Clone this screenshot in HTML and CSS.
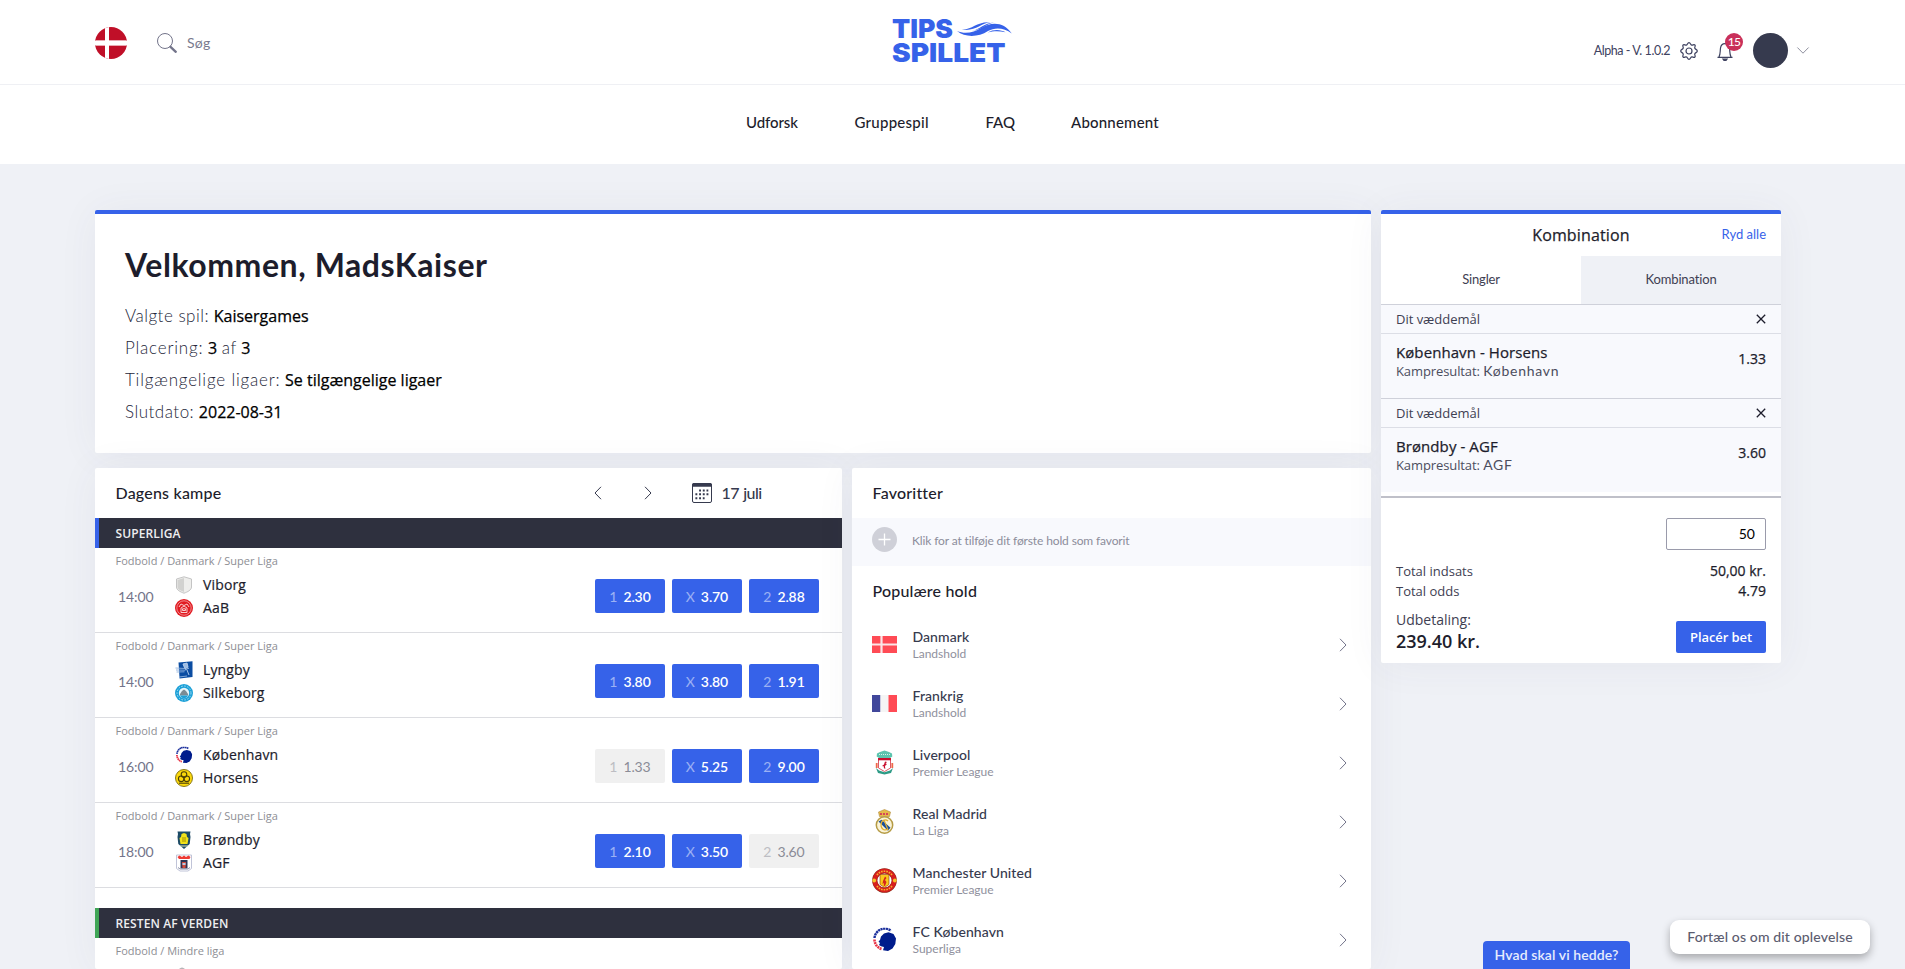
FILE: index.html
```
<!DOCTYPE html>
<html lang="da">
<head>
<meta charset="utf-8">
<title>Tipsspillet</title>
<link rel="stylesheet" href="styles.css">
</head>
<body>
<svg width="0" height="0" class="defs">
  <symbol id="next" viewBox="0 0 8 14"><path d="M1 .8 7 7 1 13.200" fill="none" stroke="currentColor" stroke-width="1"/></symbol>
  <symbol id="cross" viewBox="0 0 10 10"><path d="M.8.8 9.200 9.200M9.200.8.8 9.200" fill="none" stroke="currentColor" stroke-width="1.300"/></symbol>
  <symbol id="fck" viewBox="0 0 24 24">
    <path d="M9 21.500A10 10 0 0 1 2 11.500" fill="none" stroke="#e8384a" stroke-width="2.600" stroke-dasharray="2 .6"/>
    <path d="M2 10.500A10.300 10.300 0 0 1 18.500 3.200" fill="none" stroke="#1b2f9c" stroke-width="2.400" stroke-dasharray="2.200 .5"/>
    <path d="M8.500 9 11.500 6 16 4.800 21 6.500 23.500 11 22.800 16.500 20 21 15.500 23.400 10.500 22.800 11.500 19.500 8.500 18.800 6.500 17.500 7.500 15.500 6 14 7.500 12.500z" fill="#001c8c"/>
  </symbol>
</svg>

<header class="top">
  <div class="top-left">
    <svg class="flag-round" viewBox="0 0 32 32"><circle cx="16" cy="16" r="16" fill="#c00f28"/><path d="M10 1.200Q12 .4 14 .1v31.800Q12 31.600 10 30.800z" fill="#fff"/><path d="M.2 13h31.600v6H.2z" fill="#e9a9b1"/><path d="M0 14h32v4H0zM10 12h4v8h-4z" fill="#fff"/></svg>
    <svg class="search-icon" viewBox="0 0 20 20"><circle cx="8" cy="8" r="7.500" fill="none" stroke="#73748a"/><path d="m13.500 13.800 5.300 5" stroke="#73748a" stroke-width="2.300" stroke-linecap="round"/></svg>
    <span class="search-text">Søg</span>
  </div>
  <svg class="logo" viewBox="0 0 122 46">
    <g fill="#3662e9" class="logo-text"><text x="0" y="22" textLength="61" lengthAdjust="spacingAndGlyphs">TIPS</text><text x="0" y="45.500" textLength="113.500" lengthAdjust="spacingAndGlyphs">SPILLET</text></g>
    <path d="M65 15C73 18.500 82 16.500 89 12 99 5.500 112 5.500 119.800 17.500 112 11.500 103 11 96 15 86 21.500 73 21.500 65 15z" fill="#3662e9"/>
    <path d="M68 13.200C80 15 84 5 98.500 6.300 88 7.500 83 16.500 68 13.200zM80 15C88 13.500 92 7 102 6.600 94 8 90 14 80 15zM95.500 16.500C102 12.800 109 13.500 113.500 16.300 107 14.800 102 14.800 95.500 16.500z" fill="#3662e9"/>
  </svg>
  <div class="top-right">
    <span class="version">Alpha - V. 1.0.2</span>
    <svg class="gear" viewBox="0 0 18 18" fill="none" stroke="#3e4260" stroke-width="1.200"><circle cx="9" cy="9" r="3"/><path d="M9 .7c1.600 0 1.400 2 2.600 2.400 1.200.5 2.200-1.200 3.300-.1s-.6 2.200-.1 3.300C15.300 7.500 17.300 7.400 17.300 9s-2 1.500-2.500 2.700 1.200 2.200.1 3.300-2.200-.6-3.300-.1C10.400 15.300 10.600 17.300 9 17.300s-1.400-2-2.600-2.400c-1.200-.5-2.200 1.200-3.300.1s.6-2.200.1-3.300C2.700 10.500.7 10.600.7 9s2-1.500 2.500-2.700S2 4.100 3.100 3s2.200.6 3.300.1C7.600 2.700 7.400.7 9 .7z"/></svg>
    <div class="bell-wrap">
      <svg class="bell" viewBox="0 0 16 20" fill="none" stroke="#3e4260" stroke-width="1.200"><path d="M.5 16.300h15M2 16c1.500-3 1-5 1.500-9C4 3.500 6 2.600 8 2.600s4 .9 4.500 4.400c.5 4 0 6 1.500 9"/><path d="M6 18.200h4l-1 1.300H7z" fill="#3e4260"/></svg>
      <span class="badge">15</span>
    </div>
    <span class="avatar"></span>
    <svg class="down" viewBox="0 0 12 7"><path d="M.4.500 6 6.200 11.600.5" fill="none" stroke="#8f909f"/></svg>
  </div>
</header>
<nav class="nav"><a class="n1">Udforsk</a><a class="n2">Gruppespil</a><a class="n3">FAQ</a><a class="n4">Abonnement</a></nav>

<main class="page">
  <div class="main-col">
    <section class="card welcome">
      <h1>Velkommen, MadsKaiser</h1>
      <p><span class="l1">Valgte spil:</span> <b>Kaisergames</b></p>
      <p><span class="l2">Placering:</span> <b>3</b> <span>af</span> <b>3</b></p>
      <p><span class="l3">Tilgængelige ligaer:</span> <b>Se tilgængelige ligaer</b></p>
      <p><span class="l4">Slutdato:</span> <b class="date">2022-08-31</b></p>
    </section>
    <div class="columns">
      <section class="card matches">
        <div class="card-head">
          <h2>Dagens kampe</h2>
          <svg class="arrow prev" viewBox="0 0 8 14"><use href="#next"/></svg>
          <svg class="arrow fwd" viewBox="0 0 8 14"><use href="#next"/></svg>
          <svg class="calendar" viewBox="0 0 20 20"><rect x=".5" y=".5" width="19" height="19" rx="1.500" fill="none" stroke="#363a4e"/><path d="M0 3.800V2a2 2 0 0 1 2-2h16a2 2 0 0 1 2 2v1.800z" fill="#363a4e"/><g stroke="#363a4e" stroke-width="1.900" stroke-dasharray="1.900 1.800"><path d="M7.100 7.500h9.200M3.400 11.300h13M3.400 15.200h9.200"/></g></svg>
          <span class="day">17 juli</span>
        </div>
        <div class="league">SUPERLIGA</div>
        <article class="match">
          <div class="path">Fodbold / Danmark / Super Liga</div>
          <div class="match-body">
            <time>14:00</time>
            <div class="teams">
              <div><svg viewBox="0 0 18 18"><path d="M9 .8 16.500 3v8c0 3-4 5-7.500 6.200C5.500 16 1.500 14 1.500 11V3z" fill="#eeeeec" stroke="#c4c4c4"/><path d="M9 2v14C5 14.500 2.500 13 2.500 11V4z" fill="#d2d2d0"/></svg>Viborg</div>
              <div><svg viewBox="0 0 18 18"><circle cx="9" cy="9" r="9" fill="#e11b22"/><circle cx="9" cy="9" r="7.200" fill="none" stroke="#f6b3b5" stroke-width=".7"/><path d="M4 8 6 5l3 1.500L12 5l2 3M6 13.500V9l3-2 3 2v4.500zM7.500 9.800h3v1.700h-3z" fill="none" stroke="#fbdcdc" stroke-width=".9"/></svg>AaB</div>
            </div>
            <div class="odds"><button><i>1</i>2.30</button><button><i>X</i>3.70</button><button><i>2</i>2.88</button></div>
          </div>
        </article>
        <article class="match">
          <div class="path">Fodbold / Danmark / Super Liga</div>
          <div class="match-body">
            <time>14:00</time>
            <div class="teams">
              <div><svg viewBox="0 0 18 18"><path d="m3.500 1.500 14-1.200V16L4.500 17.500z" fill="#0b4da2"/><path d="m8 3 4-1 1 4-3 2zM10 9l4-2M12 9l2 5" stroke="#bcd3ee" fill="#9dbde3" stroke-width=".9"/><path d="M.5 7 10 7.500M1 9l9 .2M1.500 11l8-.2M4 16l8-1" stroke="#8fb1dc" stroke-width=".9"/></svg>Lyngby</div>
              <div><svg viewBox="0 0 18 18"><circle cx="9" cy="9" r="9" fill="#1da1d8"/><circle cx="9" cy="9" r="7" fill="none" stroke="#a9def3" stroke-width="1" stroke-dasharray="1.500 1.500"/><circle cx="9" cy="9" r="5.200" fill="#e5f5fb"/><path d="M5 10 7 7l2-1.500L11 7l2 3v1.500H5z" fill="#7b8c94"/><path d="M5 11.500h8c-1 2-2 2.500-4 2.500s-3-.5-4-2.500z" fill="#1da1d8"/></svg>Silkeborg</div>
            </div>
            <div class="odds"><button><i>1</i>3.80</button><button><i>X</i>3.80</button><button><i>2</i>1.91</button></div>
          </div>
        </article>
        <article class="match">
          <div class="path">Fodbold / Danmark / Super Liga</div>
          <div class="match-body">
            <time>16:00</time>
            <div class="teams">
              <div><svg viewBox="0 0 18 18"><use href="#fck" x=".5" y=".5" width="17" height="17"/></svg>København</div>
              <div><svg viewBox="0 0 18 18"><circle cx="9" cy="9" r="8.500" fill="#fbd80b" stroke="#8b7a1a"/><g fill="none" stroke="#4a3f08" stroke-width="1.100"><circle cx="9" cy="5.500" r="2.800"/><circle cx="6.200" cy="9.800" r="2.800"/><circle cx="11.800" cy="9.800" r="2.800"/><path d="M4 14.200h10"/></g></svg>Horsens</div>
            </div>
            <div class="odds"><button class="off"><i>1</i>1.33</button><button><i>X</i>5.25</button><button><i>2</i>9.00</button></div>
          </div>
        </article>
        <article class="match">
          <div class="path">Fodbold / Danmark / Super Liga</div>
          <div class="match-body">
            <time>18:00</time>
            <div class="teams">
              <div><svg viewBox="0 0 18 18"><path d="M2.500.5h13L15 3l.5 3-.8 7-5.700 5-5.700-5L2.500 6 3 3z" fill="#1c4a66"/><path d="m6.500 3 2.500-1 2.500 1 .5 3 1.500 1-1 6H5.500l-1-6L6 6z" fill="#f0e11a"/><path d="M7 6h4v5H7z" fill="#c9b90c"/><path d="M5 15h8" stroke="#d9dfb8"/></svg>Brøndby</div>
              <div><svg viewBox="0 0 18 18"><path d="M1.500 1h15v13.500L13 17H5l-3.500-2.500z" fill="#fff" stroke="#b9bdd4" stroke-width=".9"/><path d="m2.500 3 2-1.500L7 3l2-1.500L11 3l2.500-1.500 2 1.500-1 2H4z" fill="#ee3a34"/><path d="M5.500 6h7v8.500h-7z" fill="#2c3553"/><path d="M7 8h4l-.5 6h-3z" fill="#d24a3c"/><path d="M7.500 9h3v2h-3z" fill="#b9cbe0"/><path d="M3 13.500 5 15h8l2-1.500" fill="none" stroke="#8a90a8"/></svg>AGF</div>
            </div>
            <div class="odds"><button><i>1</i>2.10</button><button><i>X</i>3.50</button><button class="off"><i>2</i>3.60</button></div>
          </div>
        </article>
        <div class="league world">RESTEN AF VERDEN</div>
        <article class="match last">
          <div class="path">Fodbold / Mindre liga</div>
          <svg class="peek" viewBox="0 0 6 2"><path d="M0 2Q3-1 6 2z" fill="#b5b5b8"/></svg>
        </article>
      </section>

      <section class="card favs">
        <div class="card-head"><h2>Favoritter</h2></div>
        <div class="add">
          <svg viewBox="0 0 25 25"><circle cx="12.500" cy="12.500" r="12.500" fill="#cfd0d8"/><path d="M12.500 6.500v12M6.500 12.500h12" stroke="#fff" stroke-width="1.300"/></svg>
          <span>Klik for at tilføje dit første hold som favorit</span>
        </div>
        <h2 class="sub">Populære hold</h2>
        <ul>
          <li><svg viewBox="0 0 25 25"><path d="M0 4h25v17H0z" fill="#ff4b55"/><path d="M0 12.500h25M9.500 4v17" stroke="#fbe5e7" stroke-width="2.200"/></svg><div><b>Danmark</b><small>Landshold</small></div><svg class="go"><use href="#next"/></svg></li>
          <li><svg viewBox="0 0 25 25"><path d="M0 4h8.500v17H0z" fill="#41479b"/><path d="M8.500 4h8v17h-8z" fill="#f5f5f5"/><path d="M16.500 4H25v17h-8.500z" fill="#ff4b55"/></svg><div><b>Frankrig</b><small>Landshold</small></div><svg class="go"><use href="#next"/></svg></li>
          <li><svg viewBox="0 0 25 25"><path d="m5 3.500 3-1.500L12.500.5 17 2l3 1.500.3 3L18 8H7L4.700 6.500z" fill="#5cc4ae"/><path d="M7 4.500h11" stroke="#d6f2ec" stroke-dasharray="1 1"/><path d="M6.500 9.500h12v8.500l-6 3.500-6-3.500z" fill="#fff" stroke="#dc5a68"/><path d="M6 8h13v2.300H6z" fill="#c8102e"/><path d="m13 11.500 2 .5-1.500 1.500 1.500.5-2 2 .3 3-1.500-1 .2-1.500-2-.5 2-1.500z" fill="#c8102e"/><path d="M4.700 13v5M20.300 13v5" stroke="#ef6a4a" stroke-width="1.800"/><path d="m4 18 2 5 6.500 1.500L19 23l2-5-3 2.500-5.500 1.700L7 20.500z" fill="#2d9b86"/></svg><div><b>Liverpool</b><small>Premier League</small></div><svg class="go"><use href="#next"/></svg></li>
          <li><svg viewBox="0 0 25 25"><path d="M7.500 7.500 6.500 3 9 2l3.500-1.500L16 2l2.500 1-1 4.500z" fill="#e6b94a" stroke="#b08a3a" stroke-width=".6"/><path d="M8 5h9" stroke="#d6455a" stroke-width="2" stroke-dasharray="2 1"/><circle cx="12.500" cy="16" r="8.200" fill="#faf3d6" stroke="#b59b45" stroke-width="1.500"/><path d="m6.500 12.500 3-1.800 9 8-2.500 3z" fill="#164f9c"/><path d="M16 12c-3-2.500-7-.5-7 4s4 6 7 4M12 11l4 10" fill="none" stroke="#dfae33" stroke-width="1.200"/></svg><div><b>Real Madrid</b><small>La Liga</small></div><svg class="go"><use href="#next"/></svg></li>
          <li><svg viewBox="0 0 25 25"><circle cx="12.500" cy="12.500" r="9.700" fill="#fff" stroke="#8c2a17" stroke-width="5.200"/><circle cx="12.500" cy="12.500" r="9.700" fill="none" stroke="#d81e1e" stroke-width="4.200"/><path d="M5 7A9.300 9.300 0 0 1 20 7M5 18A9.300 9.300 0 0 0 20 18" fill="none" stroke="#f7b32b" stroke-width="1.600" stroke-dasharray="1.600 1"/><circle cx="2.200" cy="12.500" r="1.900" fill="#f7c12b"/><circle cx="22.800" cy="12.500" r="1.900" fill="#f7c12b"/><path d="M8 6.500h9v10l-4.500 3L8 16.500z" fill="#f9c81c" stroke="#8c2a17" stroke-width=".6"/><path d="m13 8.500 1.500 1.500-1.500 2 1.500 2-1.500 4-1.300-.2.300-2.800-1.500 1 .5-3z" fill="#d4261b"/></svg><div><b>Manchester United</b><small>Premier League</small></div><svg class="go"><use href="#next"/></svg></li>
          <li><svg viewBox="0 0 25 25"><use href="#fck" x=".5" y=".5" width="24" height="24"/></svg><div><b>FC København</b><small>Superliga</small></div><svg class="go"><use href="#next"/></svg></li>
        </ul>
      </section>
    </div>
  </div>

  <aside class="card slip">
    <div class="slip-head"><span></span><h2>Kombination</h2><a>Ryd alle</a></div>
    <div class="tabs"><span>Singler</span><span class="active">Kombination</span></div>
    <div class="bet">
      <div class="bet-head">Dit væddemål<svg><use href="#cross"/></svg></div>
      <div class="bet-body"><div><b>København - Horsens</b><p>Kampresultat: <em>København</em></p></div><strong>1.33</strong></div>
    </div>
    <div class="bet">
      <div class="bet-head">Dit væddemål<svg><use href="#cross"/></svg></div>
      <div class="bet-body"><div><b>Brøndby - AGF</b><p>Kampresultat: <em>AGF</em></p></div><strong>3.60</strong></div>
    </div>
    <div class="total">
      <div class="stake">50</div>
      <div class="line">Total indsats<strong>50,00 kr.</strong></div>
      <div class="line">Total odds<strong>4.79</strong></div>
      <div class="payout"><div><span>Udbetaling:</span><b>239.40 kr.</b></div><button>Placér bet</button></div>
    </div>
  </aside>
</main>
<div class="name-tab">Hvad skal vi hedde?</div>
<div class="feedback">Fortæl os om dit oplevelse</div>
</body>
</html>
```
FILE: styles.css
```
* { box-sizing: border-box; }
html, body { height: 969px; overflow: hidden; }
body { margin: 0; background: #eff1f6; font-family: Lato, "Open Sans", sans-serif; color: #1d1d2c; }
h1, h2, p, ul { margin: 0; padding: 0; }
svg { display: block; flex: none; overflow: visible; }
button { border: 0; padding: 0; }
.defs { position: absolute; }

.top { height: 85px; background: #fff; border-bottom: 1px solid #eff0f4; display: grid; grid-template-columns: 797px 122px 1fr; padding-left: 95px; }
.top-left { display: flex; height: 86px; align-items: center; }
.flag-round { width: 32px; height: 32px; }
.search-icon { width: 20px; height: 20px; margin-left: 30px; }
.search-text { margin-left: 10px; font-size: 14px; color: #797a8d; letter-spacing: .3px; padding-bottom: 2px; }
.logo { width: 122px; height: 46px; margin-top: 16px; }
.logo-text { font: 900 26px Inter, sans-serif; }
.top-right { display: flex; height: 101px; align-items: center; justify-content: flex-end; padding-right: 96px; }
.version { font: 400 12.500px Lato, sans-serif; letter-spacing: -.45px; color: #3e4260; white-space: nowrap; margin-right: 10px; }
.gear { width: 18px; height: 18px; margin-right: 19px; }
.bell-wrap { position: relative; width: 16px; height: 20px; margin-right: 20px; }
.bell { width: 16px; height: 20px; }
.badge { position: absolute; left: 8px; top: -8px; width: 18px; height: 18px; border-radius: 50%; background: #c9305a; color: #fff; font: 500 12px/18px Lato, sans-serif; text-align: center; letter-spacing: -.6px; }
.avatar { width: 35px; height: 35px; border-radius: 50%; background: #363a4e; margin-right: 9px; }
.down { width: 12px; height: 7px; }

.nav { height: 79px; background: #fff; padding: 0 0 6px 746px; display: flex; align-items: center; font-weight: 500; font-size: 15px; }
.n1 { width: 108.500px; letter-spacing: -.1px; }
.n2 { width: 131px; letter-spacing: .25px; }
.n3 { width: 85.500px; }
.n4 { letter-spacing: .2px; }

.page { display: flex; align-items: flex-start; gap: 10px; padding: 46px 0 0 95px; }
.main-col { width: 1276px; }
.card { background: #fff; border-radius: 2px; box-shadow: 0 2px 40px rgba(70, 70, 110, .06); }
.welcome { height: 243px; border-top: 4px solid #3662e9; padding: 31px 30px 0; }
.welcome h1 { font-size: 32px; line-height: 40px; font-weight: 700; letter-spacing: .57px; margin-bottom: 15px; }
.welcome p { font: 300 17px/32px Lato, sans-serif; color: #25273a; white-space: nowrap; }
.welcome p span { letter-spacing: .5px; }
.welcome p .l2 { letter-spacing: .8px; }
.welcome p .l3 { letter-spacing: .8px; }
.welcome p b { font: 500 16px/32px "Open Sans", sans-serif; color: #000; -webkit-text-stroke: .25px #000; }
.columns { display: flex; gap: 10px; margin-top: 15px; align-items: flex-start; }
.matches { width: 747px; height: 501px; }
.favs { width: 519px; height: 501px; }
.card-head { height: 50px; padding-left: 20.500px; display: flex; align-items: center; }
h2 { font-size: 16px; line-height: 24px; font-weight: 500; letter-spacing: .2px; }
.matches h2 { width: 478px; }
.arrow { width: 8px; height: 14px; color: #363a4e; }
.prev { transform: scaleX(-1); margin-right: 42px; }
.fwd { margin-right: 40px; }
.calendar { width: 20px; height: 20px; margin-right: 10px; }
.day { font-size: 16px; line-height: 20px; padding-bottom: 1px; font-weight: 500; color: #363a4e; letter-spacing: -.6px; word-spacing: 1px; }
.league { height: 30px; background: #2e303e; border-left: 4px solid #3662e9; padding-left: 16.500px; color: #eeeef0; font: 600 12px/32px "Open Sans", sans-serif; letter-spacing: .12px; }
.world { margin-top: 20px; border-left-color: #3fa556; }
.match { height: 85px; border-bottom: 1px solid #dcdde1; padding-top: 4px; }
.last { height: 31px; border: 0; }
.peek { width: 6px; height: 2px; margin: 7px 0 0 84px; }
.path { padding-left: 20.500px; font: 400 11px/18px "Open Sans", sans-serif; color: #8d8e94; }
.match-body { display: flex; padding: 2px 23px 0 23px; height: 50px; align-items: center; }
.match time { width: 57px; font-size: 14px; color: #73748a; letter-spacing: -.1px; }
.teams { width: 420px; font: 500 14px/23px "Open Sans", sans-serif; letter-spacing: .15px; -webkit-text-stroke: .2px #1d1d2c; }
.teams div { display: flex; align-items: center; gap: 10px; height: 23px; line-height: 22px; }
.teams svg { width: 18px; height: 18px; }
.odds { display: flex; gap: 7px; }
.odds button { width: 70px; height: 34px; border-radius: 2px; background: #3662e9; color: #fff; font: 600 14px Lato, sans-serif; letter-spacing: -.1px; }
.odds i { font-style: normal; font-weight: 400; opacity: .5; margin-right: 6px; }
.odds .off { background: #f0f0f0; color: #8b8c97; font-weight: 400; }

.add { height: 48px; padding: 0 0 5px 20px; background: #f8f9fd; display: flex; align-items: center; gap: 15px; font-size: 12px; letter-spacing: -.13px; color: #8c8d9b; }
.add svg { width: 25px; height: 25px; }
.add span { padding-top: 2px; }
.sub { padding: 13px 0 12px 20.500px; }
.favs li { display: flex; height: 59px; align-items: center; padding: 0 24px 0 20px; }
.favs li svg { width: 25px; height: 25px; }
.favs li div { flex: 1; padding-left: 15.500px; }
.favs b { display: block; font-size: 14px; line-height: 17px; font-weight: 500; color: #363a4e; letter-spacing: .07px; }
.favs small { display: block; font-size: 12px; line-height: 17px; color: #8f909d; }
.favs li .go { width: 8px; height: 14px; color: #73748a; }

.slip { width: 400px; height: 453px; border-top: 4px solid #3662e9; color: #1d1d2c; font: 400 13px "Open Sans", sans-serif; }
.slip-head { height: 42px; padding: 0 15px; display: grid; grid-template-columns: 1fr auto 1fr; align-items: center; }
.slip h2 { font: 500 16px/24px "Open Sans", sans-serif; letter-spacing: .15px; -webkit-text-stroke: .25px #1d1d2c; }
.slip-head a { text-align: right; color: #3662e9; font: 400 13px/19px Lato, sans-serif; padding-bottom: 1px; }
.tabs { display: flex; height: 48px; font: 400 13px/47px Lato, sans-serif; color: #3e4052; text-align: center; letter-spacing: -.15px; }
.tabs span { width: 200px; }
.tabs .active { background: #eff1f6; }
.bet { height: 94px; background: #f8f9fd; border-top: 1px solid #cfd1da; }
.bet-head { height: 29px; border-bottom: 1px solid #dcdee6; padding: 0 15px; display: flex; justify-content: space-between; align-items: center; color: #3e4052; letter-spacing: -.02px; }
.bet-head svg { width: 10px; height: 10px; color: #1d1d2c; }
.bet-body { display: flex; justify-content: space-between; padding: 8px 15px; }
.bet-body b { display: block; font-weight: 500; font-size: 15px; line-height: 20px; letter-spacing: .08px; -webkit-text-stroke: .25px #1d1d2c; }
.bet-body p { line-height: 19px; color: #4b4d5e; letter-spacing: -.1px; }
.bet-body em { font: 400 14px Lato, sans-serif; letter-spacing: .75px; }
.bet-body strong { line-height: 33px; }
.slip strong { font-weight: 500; font-size: 14px; color: #1d1d2c; -webkit-text-stroke: .25px #1d1d2c; }
.total { margin-top: 4px; border-top: 2px solid #bfc0c9; padding: 20px 15px 0; color: #3e4052; }
.stake { width: 100px; height: 32px; border: 1px solid #9a9bab; border-radius: 2px; margin: 0 0 11px auto; padding-right: 10px; text-align: right; font: 400 14px/30px Lato, sans-serif; color: #000; }
.line { height: 20px; line-height: 20px; display: flex; justify-content: space-between; }
.payout { display: flex; justify-content: space-between; padding-top: 8px; }
.payout span { display: block; font-size: 14px; line-height: 22px; }
.payout b { display: block; font-size: 18px; line-height: 21px; font-weight: 600; color: #1d1d2c; letter-spacing: -.02px; }
.payout button { width: 90px; height: 32px; margin-top: 12px; border-radius: 2px; background: #3662e9; color: #fff; font: 600 13px "Open Sans", sans-serif; letter-spacing: -.09px; }

.name-tab { position: absolute; left: 1483px; top: 941px; width: 147px; height: 28px; border-radius: 4px 4px 0 0; background: #3662e9; color: #e6ecfd; font: 600 14px/28px Lato, sans-serif; text-align: center; letter-spacing: .1px; }
.feedback { position: absolute; left: 1670px; top: 920px; width: 200px; height: 34px; border-radius: 9px; background: #fff; box-shadow: 0 4px 8px rgba(0, 0, 0, .3); color: #5c5d70; font: 500 14px/34px Lato, sans-serif; letter-spacing: .14px; text-align: center; }
```
